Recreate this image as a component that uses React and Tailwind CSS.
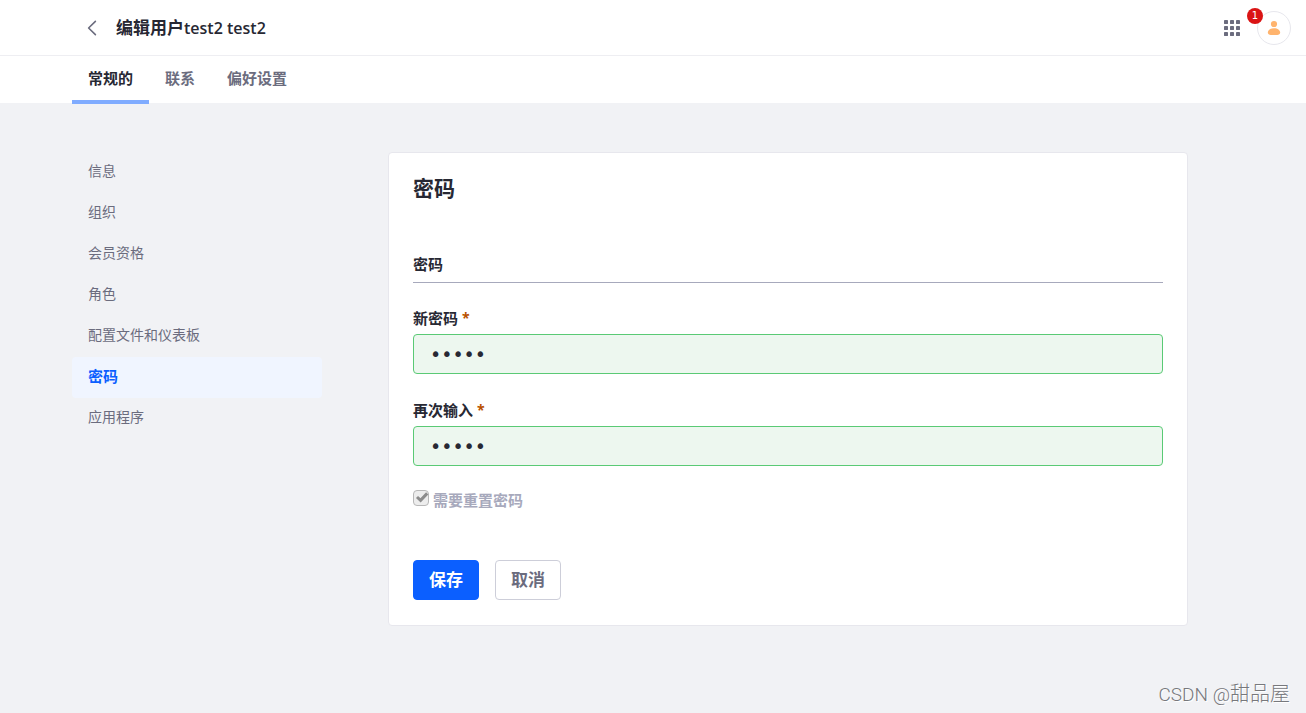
import React, { useState } from 'react';

const tabs = ['常规的', '联系', '偏好设置'];

const sections = ['信息', '组织', '会员资格', '角色', '配置文件和仪表板', '密码', '应用程序'];

const AppsIcon = () => (
  <svg className="w-4 h-4" viewBox="0 0 16 16" fill="currentColor" aria-hidden="true">
    {[0, 6, 12].map((y) =>
      [0, 6, 12].map((x) => <rect key={`${x}-${y}`} x={x} y={y} width="4" height="4" rx="0.4" />)
    )}
  </svg>
);

const UserIcon = () => (
  <svg className="w-4 h-4" viewBox="0 0 16 16" fill="currentColor" aria-hidden="true">
    <circle cx="8" cy="4" r="3.1" />
    <path d="M8 8.2c-3.7 0-6.2 2-6.2 4.4 0 1.7 1.3 2.4 3 2.4h6.4c1.7 0 3-.7 3-2.4 0-2.4-2.5-4.4-6.2-4.4z" />
  </svg>
);

const Header = () => (
  <header className="flex items-center justify-between h-14 pl-[84px] pr-[15px] bg-white border-b border-[#eeeef2]">
    <div className="flex items-center gap-4">
      <a href="#back" aria-label="返回" className="text-[#6b6c7e]">
        <svg className="w-4 h-4" viewBox="0 0 16 16" fill="none" stroke="currentColor" strokeWidth="1.6" strokeLinecap="round" strokeLinejoin="round">
          <path d="M11.4 1.4 4.6 8l6.8 6.6" />
        </svg>
      </a>
      <h1 className="flex items-center text-[17px] leading-6 font-semibold text-[#272833]">
        编辑用户<span className="font-['Open_Sans',sans-serif] text-base leading-6">test2 test2</span>
      </h1>
    </div>
    <div className="flex items-center gap-[17px]">
      <button type="button" aria-label="应用程序" className="text-[#6b6c7e]">
        <AppsIcon />
      </button>
      <button type="button" aria-label="用户菜单" className="relative flex items-center justify-center w-[34px] h-[34px] rounded-full border border-[#e7e7ed] bg-white text-[#ffb46e]">
        <UserIcon />
        <span className="absolute -top-1 -left-[11px] flex items-center justify-center w-4 h-4 rounded-full bg-[#da1414] font-['DejaVu_Sans',sans-serif] text-[10px] leading-4 text-white">
          1
        </span>
      </button>
    </div>
  </header>
);

const PasswordField = ({ id, label }) => {
  const [value, setValue] = useState('test2');

  return (
    <div className="mb-6">
      <label htmlFor={id} className="flex items-center gap-1 mb-1 text-[15px] leading-6 font-bold">
        {label}
        <span className="text-sm leading-5 text-[#b95000]">*</span>
      </label>
      <input
        id={id}
        type="password"
        required
        value={value}
        onChange={(e) => setValue(e.target.value)}
        className="block w-full h-10 px-4 rounded border border-[#5aca75] bg-[#edf7ef] font-['DejaVu_Sans',sans-serif] text-[19px] text-[#272833] outline-none"
      />
    </div>
  );
};

const App = () => {
  const [activeTab, setActiveTab] = useState('常规的');

  return (
    <div className="relative min-h-screen bg-[#f1f2f5] font-['Noto_Sans','Noto_Sans_CJK_SC',sans-serif] text-[#272833]">
      <Header />

      <nav className="h-[47px] px-[72px] bg-white">
        <ul className="flex">
          {tabs.map((tab) => (
            <li key={tab}>
              <button
                type="button"
                onClick={() => setActiveTab(tab)}
                className={`h-12 px-4 border-b-4 text-[15px] font-bold ${
                  tab === activeTab ? 'border-[#80acff] text-[#272833]' : 'border-transparent text-[#6b6c7e]'
                }`}
              >
                {tab}
              </button>
            </li>
          ))}
        </ul>
      </nav>

      <main className="flex items-start gap-[66px] pl-[72px] pr-6 pt-[49px] pb-12">
        <nav className="w-[250px] shrink-0">
          <ul>
            {sections.map((section) => (
              <li key={section}>
                <a
                  href={`#${section}`}
                  className={`flex items-center h-[41px] px-4 pb-[3px] rounded ${
                    section === '密码' ? 'bg-[#f0f5ff] text-[15px] font-bold text-[#0b5fff]' : 'text-sm text-[#6b6c7e]'
                  }`}
                >
                  {section}
                </a>
              </li>
            ))}
          </ul>
        </nav>

        <form className="flex-1 max-w-[800px] px-6 pt-[23px] pb-[25px] bg-white border border-[#e7e7ed] rounded" onSubmit={(e) => e.preventDefault()}>
          <h2 className="mb-[52px] text-[21px] leading-6 font-semibold">密码</h2>
          <h3 className="mb-[23px] pb-1.5 border-b border-[#a7a9bc] text-[15px] leading-6 font-bold">密码</h3>

          <PasswordField id="new-password" label="新密码" />
          <PasswordField id="confirm-password" label="再次输入" />

          <div className="flex items-start gap-1 mb-[50px]">
            <span className="relative w-4 h-4">
              <input
                id="reset-required"
                type="checkbox"
                checked
                disabled
                readOnly
                className="block w-4 h-4 appearance-none rounded-sm border border-[#b8b8b8] bg-[#ededed]"
              />
              <svg className="absolute inset-0 w-4 h-4 pointer-events-none" viewBox="0 0 16 16" fill="none" stroke="#8c8c8c" strokeWidth="3" aria-hidden="true">
                <path d="M4 7 7.6 10.4 14.2 3.4" />
              </svg>
            </span>
            <label htmlFor="reset-required" className="text-[15px] leading-5 font-bold text-[#a7a9bc]">
              需要重置密码
            </label>
          </div>

          <div className="flex gap-4">
            <button type="submit" className="h-10 px-[15px] rounded border border-[#0b5fff] bg-[#0b5fff] text-[17px] font-semibold text-white">
              保存
            </button>
            <button type="button" className="h-10 px-[15px] rounded border border-[#cdced9] bg-white text-[17px] font-semibold text-[#6b6c7e]">
              取消
            </button>
          </div>
        </form>
      </main>

      <p className="absolute right-4 bottom-1 font-['Roboto','Noto_Sans_CJK_SC',sans-serif] text-[19px] leading-7 font-light text-[#77787c] [text-shadow:1px_1px_0_#ffffff]">
        CSDN @<span className="text-xl leading-7">甜品屋</span>
      </p>
    </div>
  );
};

export default App;
